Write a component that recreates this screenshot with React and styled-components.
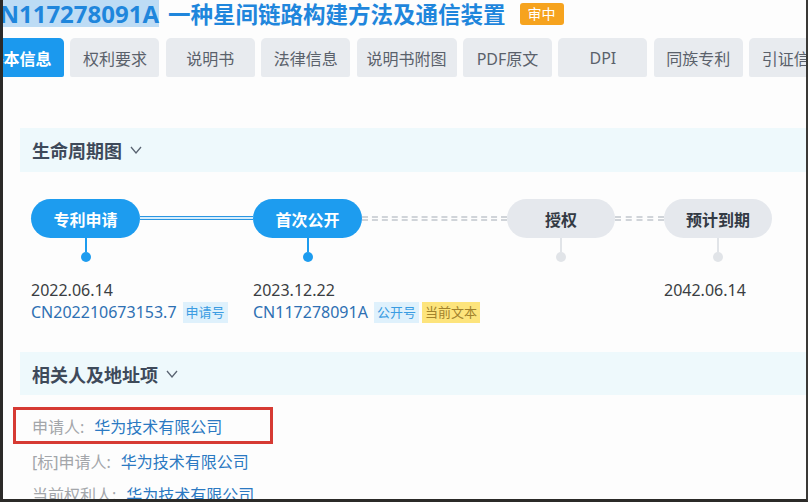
import React from "react";
import styled, { createGlobalStyle } from "styled-components";

const GlobalStyle = createGlobalStyle`
  html, body {
    margin: 0;
    padding: 0;
    background: #fdfdfd;
  }
  body {
    font-family: "Noto Sans", "Noto Sans CJK SC", sans-serif;
  }
`;

const Screen = styled.div`
  position: relative;
  width: 808px;
  height: 502px;
  overflow: hidden;
  background: #fdfdfd;

  // dark bezel of the photographed monitor, lies over the page
  &::after {
    content: "";
    position: absolute;
    inset: 0;
    border-left: 3px solid #2b2a28;
    border-right: 2px solid #3a3936;
    border-bottom: 3px solid #2b2a28;
    pointer-events: none;
  }
`;

const TitleRow = styled.div`
  display: flex;
  align-items: center;
  height: 27px;
  margin-left: -16px;
  white-space: nowrap;
`;

const PatentNo = styled.span`
  background: #bddcf5;
  color: #1f86dc;
  font: 700 24px/27px "Noto Sans", sans-serif;
`;

const TitleText = styled.span`
  margin-left: 9px;
  color: #1f86dc;
  font: 700 22.5px/27px "Noto Sans CJK SC", sans-serif;
`;

const StatusBadge = styled.span`
  margin-left: 14px;
  padding: 0 8px;
  height: 22px;
  line-height: 22px;
  border-radius: 3px;
  background: #f6a31e;
  color: #fff;
  font: 400 14px "Noto Sans CJK SC", sans-serif;
`;

const Tabs = styled.div`
  display: flex;
  gap: 6.4px;
  margin: 11px 0 0 -25px;
  height: 39px;
  white-space: nowrap;
`;

const Tab = styled.div`
  flex-shrink: 0;
  min-width: 89px;
  box-sizing: border-box;
  padding: 0 10px;
  display: flex;
  align-items: center;
  justify-content: center;
  border-radius: 5px 5px 2px 2px;
  background: ${p => (p.$active ? "#1b99ee" : "#e8ebef")};
  color: ${p => (p.$active ? "#fff" : "#5a616b")};
  font-size: 16px;
  font-weight: ${p => (p.$active ? 700 : 400)};
`;

const SectionBar = styled.div`
  display: flex;
  align-items: center;
  gap: 8px;
  margin: ${p => p.$top}px 0 0 20px;
  height: ${p => p.$h}px;
  padding-left: 12px;
  background: #eef9fc;
`;

const SectionTitle = styled.span`
  color: #3e4a5a;
  font: 700 18px "Noto Sans CJK SC", sans-serif;
`;

const Chevron = () => (
  <svg width="12" height="8" viewBox="0 0 12 8">
    <polyline points="1,1 6,7 11,1" fill="none" stroke="#5a6472" strokeWidth="1.3" />
  </svg>
);

const Timeline = styled.div`
  display: flex;
  align-items: flex-start;
  margin-top: 27px;
  padding-left: 31px;
`;

const Stage = styled.div`
  flex-shrink: 0;
  width: ${p => p.$w}px;
  display: flex;
  flex-direction: column;
`;

const Pill = styled.div`
  height: 39px;
  border-radius: 20px;
  display: flex;
  align-items: center;
  justify-content: center;
  background: ${p => (p.$done ? "#1d9cef" : "#e5e8ed")};
  color: ${p => (p.$done ? "#fff" : "#333a44")};
  font: 700 16px "Noto Sans CJK SC", sans-serif;
`;

const Stem = styled.div`
  align-self: center;
  width: 2px;
  height: 14px;
  background: ${p => (p.$done ? "#1d9cef" : "#e1e4e8")};
`;

const Dot = styled.div`
  align-self: center;
  width: 10px;
  height: 10px;
  border-radius: 50%;
  background: ${p => (p.$done ? "#1d9cef" : "#e1e4e8")};
`;

const DateText = styled.div`
  margin-top: 17px;
  line-height: 22px;
  font-size: 16px;
  color: #3a3d42;
  white-space: nowrap;
`;

const NumberLine = styled.div`
  display: flex;
  align-items: center;
  gap: 6px;
  height: 22px;
  white-space: nowrap;
`;

const DocNo = styled.span`
  font-size: 16px;
  color: #2e70b3;
`;

const Tag = styled.span`
  padding: 0 3px;
  line-height: 21px;
  font-size: 13px;
  background: ${p => (p.$tone === "yellow" ? "#fde47c" : "#dff1fc")};
  color: ${p => (p.$tone === "yellow" ? "#a2822c" : "#3a9ce2")};
  & + & {
    margin-left: -3px;
  }
`;

const Connector = styled.div`
  flex-shrink: 0;
  width: ${p => p.$w}px;
  margin-top: 17px;
  height: ${p => (p.$done ? 2 : 1)}px;
  ${p =>
    p.$done
      ? `
    border-top: 1.5px solid #2b96e2;
    border-bottom: 1.5px solid #2b96e2;
    background: #d6edfc;
  `
      : `
    border-top: 2px dashed #d0d4d9;
    border-bottom: 2px dashed #d0d4d9;
  `}
`;

const PartyBox = styled.div`
  display: flex;
  align-items: center;
  box-sizing: border-box;
  width: 260px;
  height: 37px;
  margin: 12px 0 0 13px;
  padding-left: 16px;
  border: 3px solid #d63a33;
`;

const PartyRow = styled.div`
  display: flex;
  align-items: center;
  height: 33px;
  padding-left: 32px;
`;

const PartyLabel = styled.span`
  font-size: 16px;
  color: #a3a6aa;
  margin-right: 10px;
`;

const PartyName = styled.span`
  font-size: 16px;
  color: #2b79c2;
`;

const tabs = ["基本信息", "权利要求", "说明书", "法律信息", "说明书附图", "PDF原文", "DPI", "同族专利", "引证信息"];

const stages = [
  { title: "专利申请", done: true, w: 109, date: "2022.06.14", no: "CN202210673153.7", tags: [{ t: "申请号" }] },
  { conn: true, done: true, w: 113 },
  { title: "首次公开", done: true, w: 109, date: "2023.12.22", no: "CN117278091A", tags: [{ t: "公开号" }, { t: "当前文本", tone: "yellow" }] },
  { conn: true, w: 145 },
  { title: "授权", w: 108 },
  { conn: true, w: 49 },
  { title: "预计到期", w: 108, date: "2042.06.14" },
];

const parties = [
  { label: "[标]申请人:", name: "华为技术有限公司" },
  { label: "当前权利人:", name: "华为技术有限公司" },
];

export default function App() {
  return (
    <Screen>
      <GlobalStyle />
      <TitleRow>
        <PatentNo>CN117278091A</PatentNo>
        <TitleText>一种星间链路构建方法及通信装置</TitleText>
        <StatusBadge>审中</StatusBadge>
      </TitleRow>

      <Tabs>
        {tabs.map((t, i) => (
          <Tab key={t} $active={i === 0}>{t}</Tab>
        ))}
      </Tabs>

      <SectionBar $top={51} $h={44}>
        <SectionTitle>生命周期图</SectionTitle>
        <Chevron />
      </SectionBar>

      <Timeline>
        {stages.map((s, i) =>
          s.conn ? (
            <Connector key={i} $w={s.w} $done={s.done} />
          ) : (
            <Stage key={i} $w={s.w}>
              <Pill $done={s.done}>{s.title}</Pill>
              <Stem $done={s.done} />
              <Dot $done={s.done} />
              {s.date && <DateText>{s.date}</DateText>}
              {s.no && (
                <NumberLine>
                  <DocNo>{s.no}</DocNo>
                  {s.tags.map(tag => (
                    <Tag key={tag.t} $tone={tag.tone}>{tag.t}</Tag>
                  ))}
                </NumberLine>
              )}
            </Stage>
          )
        )}
      </Timeline>

      <SectionBar $top={29} $h={43}>
        <SectionTitle>相关人及地址项</SectionTitle>
        <Chevron />
      </SectionBar>

      <PartyBox>
        <PartyLabel>申请人:</PartyLabel>
        <PartyName>华为技术有限公司</PartyName>
      </PartyBox>
      {parties.map(p => (
        <PartyRow key={p.label}>
          <PartyLabel>{p.label}</PartyLabel>
          <PartyName>{p.name}</PartyName>
        </PartyRow>
      ))}
    </Screen>
  );
}
